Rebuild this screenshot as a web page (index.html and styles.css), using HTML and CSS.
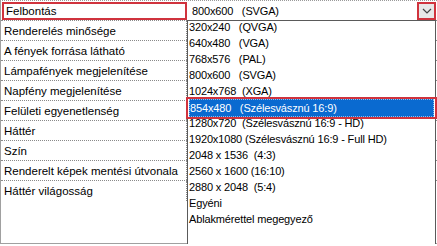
FILE: index.html
```html
<!DOCTYPE html>
<html>
<head>
<meta charset="utf-8">
<link rel="stylesheet" href="styles.css">
</head>
<body>
<div class="panel">
  <div class="props">
    <div class="row first"><div class="name sel">Felbontás</div><div class="value"><span>800x600&nbsp;&nbsp; (SVGA)</span><div class="btn"><svg width="10" height="6" viewBox="0 0 10 6"><path d="M1 1 L5 5 L9 1" fill="none" stroke="#444" stroke-width="1.2"/></svg></div></div></div>
    <div class="row"><div class="name">Renderelés minősége</div><div class="value"></div></div>
    <div class="row"><div class="name">A fények forrása látható</div><div class="value"></div></div>
    <div class="row"><div class="name">Lámpafények megjelenítése</div><div class="value"></div></div>
    <div class="row"><div class="name">Napfény megjelenítése</div><div class="value"></div></div>
    <div class="row"><div class="name">Felületi egyenetlenség</div><div class="value"></div></div>
    <div class="row"><div class="name">Háttér</div><div class="value"></div></div>
    <div class="row"><div class="name">Szín</div><div class="value"></div></div>
    <div class="row"><div class="name">Renderelt képek mentési útvonala</div><div class="value"></div></div>
    <div class="row last"><div class="name">Háttér világosság</div><div class="value"></div></div>
  </div>
  <ul class="list">
    <li>320x240&nbsp;&nbsp; (QVGA)</li>
    <li>640x480&nbsp;&nbsp; (VGA)</li>
    <li>768x576&nbsp;&nbsp; (PAL)</li>
    <li>800x600&nbsp;&nbsp; (SVGA)</li>
    <li>1024x768&nbsp; (XGA)</li>
    <li class="active"><span>854x480&nbsp;&nbsp; (Szélesvásznú 16:9)</span></li>
    <li>1280x720&nbsp; (Szélesvásznú 16:9 - HD)</li>
    <li>1920x1080 (Szélesvásznú 16:9 - Full HD)</li>
    <li>2048 x 1536&nbsp; (4:3)</li>
    <li>2560 x 1600 (16:10)</li>
    <li>2880 x 2048&nbsp; (5:4)</li>
    <li>Egyéni</li>
    <li>Ablakmérettel megegyező</li>
  </ul>
</div>
</body>
</html>
```
FILE: styles.css
```css
* { box-sizing: border-box; }
html, body { margin: 0; padding: 0; background: #fff; }
body { font-family: "Liberation Sans", Arial, sans-serif; font-size: 11.5px; color: #000; }
.panel {
  position: relative;
  width: 437px;
  height: 244px;
  border-left: 1px solid #a0a0a0;
  border-bottom: 1px solid #a0a0a0;
  border-top: 1px dotted #9a9a9a;
}
.props { display: flex; flex-direction: column; }
.row {
  display: flex;
  height: 20px;
  border-bottom: 1px dotted #8a8a8a;
}
.row.last { border-bottom: none; }
.name {
  width: 186px;
  flex: none;
  padding: 1px 0 0 3px;
  line-height: 19px;
  border-right: 1px dotted #8a8a8a;
  white-space: nowrap;
}
.name.sel {
  margin: 1px 0 0 1px;
  width: 185px;
  border: 2px solid #d0333d;
  padding: 0 0 0 2px;
  line-height: 15px;
}
.value {
  flex: 1;
  display: flex;
  align-items: center;
  padding-left: 5px;
  font-size: 11px;
  letter-spacing: -0.15px;
}
.first .value { justify-content: space-between; padding: 0 1px 0 5px; }
.btn {
  width: 19px;
  height: 18px;
  border: 2px solid #d0333d;
  background: #e8e8e8;
  display: flex;
  align-items: center;
  justify-content: center;
}
.list {
  position: absolute;
  left: 186px;
  top: 19px;
  width: 249px;
  height: 225px;
  margin: 0;
  padding: 0;
  list-style: none;
  background: #fff;
  border: 1px solid #5a5a5a;
  font-size: 11px;
  letter-spacing: -0.15px;
}
.list li {
  height: 16px;
  line-height: 16px;
  padding-left: 1px;
  white-space: nowrap;
}
.list li:first-child { margin-top: -2px; }
.list li.active {
  margin: -2px -2px -4px -2px;
  height: 22px;
  border: 2px solid #d0333d;
  padding: 0 1px 0 1px;
  position: relative;
}
.list li.active span {
  display: block;
  height: 18px;
  line-height: 18px;
  background: #0a6ad0;
  color: #fff;
  padding-left: 1px;
  outline: 1px dotted #8fbcea;
  outline-offset: -1px;
}
```
